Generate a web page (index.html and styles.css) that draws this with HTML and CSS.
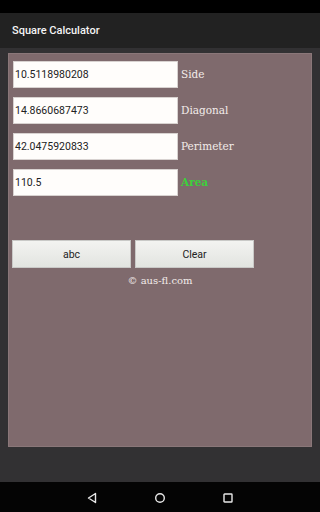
FILE: index.html
```html
<!DOCTYPE html>
<html>
<head>
<meta charset="utf-8">
<link rel="stylesheet" href="styles.css">
</head>
<body>
<div class="screen">
  <div class="status"></div>
  <div class="actionbar">Square Calculator</div>
  <div class="content">
    <div class="panel">
      <div class="rows">
        <div class="row"><div class="field">10.5118980208</div><div class="label">Side</div></div>
        <div class="row"><div class="field">14.8660687473</div><div class="label">Diagonal</div></div>
        <div class="row"><div class="field">42.0475920833</div><div class="label">Perimeter</div></div>
        <div class="row"><div class="field">110.5</div><div class="label active">Area</div></div>
      </div>
      <div class="buttons">
        <div class="btn">abc</div>
        <div class="btn">Clear</div>
      </div>
      <div class="copy">© aus-fl.com</div>
    </div>
  </div>
  <div class="navbar">
    <svg class="nav" width="12" height="12" viewBox="0 0 12 12"><path d="M9.5 1.5 L2.5 6 L9.5 10.5 Z" fill="none" stroke="#e8e8e8" stroke-width="1.4" stroke-linejoin="round"/></svg>
    <svg class="nav" width="12" height="12" viewBox="0 0 12 12"><circle cx="6" cy="6" r="4.3" fill="none" stroke="#e8e8e8" stroke-width="1.4"/></svg>
    <svg class="nav" width="12" height="12" viewBox="0 0 12 12"><rect x="2" y="2" width="8" height="8" rx="0.6" fill="none" stroke="#e8e8e8" stroke-width="1.4"/></svg>
  </div>
</div>
</body>
</html>
```
FILE: styles.css
```css
* { box-sizing: border-box; }
html, body { margin: 0; padding: 0; }
body { width: 320px; height: 512px; overflow: hidden; background: #000; }
.screen { width: 320px; height: 512px; display: flex; flex-direction: column; }
.status { height: 13px; background: #000; flex: none; }
.actionbar {
  height: 35px; flex: none; background: #222222; color: #f4f4f4;
  font-family: Roboto, sans-serif; font-weight: 500; font-size: 11px;
  display: flex; align-items: center; padding-left: 12px; padding-bottom: 1px;
}
.content {
  flex: 1; background: #323133; padding: 5px 8px 35px 8px; display: flex;
}
.panel {
  flex: 1; background: #7f6a6d; border: 1px solid #8a7779;
  padding: 7px 0 0 4px;
}
.rows { display: flex; flex-direction: column; gap: 9px; }
.row { display: flex; align-items: center; }
.field {
  width: 165px; height: 27px; background: #fffdfb; border: 1px solid #d8d2d0;
  font-family: Roboto, sans-serif; font-size: 10.5px; color: #222;
  display: flex; align-items: center; padding-left: 1px;
}
.label {
  margin-left: 3px; font-family: "DejaVu Serif", serif; font-size: 10.5px;
  color: #f3ecea; padding-bottom: 1px;
}
.label.active { color: #3bd23a; font-weight: bold; }
.buttons { display: flex; gap: 4px; margin-top: 44px; margin-left: -1px; }
.btn {
  width: 119px; height: 28px; border: 1px solid #c9c9c7;
  background: linear-gradient(#f3f3f1, #e2e4e0);
  font-family: Roboto, sans-serif; font-size: 10.5px; color: #222;
  display: flex; align-items: center; justify-content: center;
}
.copy {
  margin-top: 7px; margin-left: -4px; text-align: center;
  font-family: "DejaVu Serif", serif; font-size: 10px; color: #f3ecea;
}
.navbar {
  height: 30px; flex: none; background: #040404;
  display: flex; align-items: center; justify-content: center; gap: 56px;
  padding-top: 1px;
}
.nav { display: block; }
```
